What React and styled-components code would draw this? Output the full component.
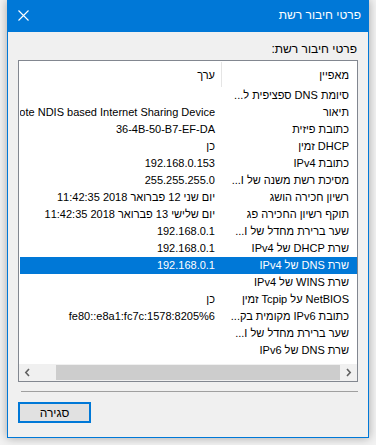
import React from "react";
import styled, { createGlobalStyle } from "styled-components";

const GlobalStyle = createGlobalStyle`
  html, body { margin: 0; padding: 0; }
  body {
    background: #f2f2f2;
    font-family: "Liberation Sans", "DejaVu Sans", Arial, sans-serif;
    font-size: 12px;
  }
`;

const Page = styled.div`
  width: 376px;
  height: 445px;
  padding-left: 7px;
  box-sizing: border-box;
  overflow: hidden;
`;

const Window = styled.div`
  width: 362px;
  height: 438px;
  box-sizing: border-box;
  border: 1px solid #0078d7;
  border-top: none;
  background: #f0f0f0;
  box-shadow: 0 0 9px rgba(0, 0, 0, 0.32);
  display: flex;
  flex-direction: column;
`;

const TitleBar = styled.div`
  height: 31px;
  flex: none;
  background: #0078d7;
  color: #fff;
  direction: rtl;
  display: flex;
  align-items: center;
  justify-content: space-between;
  padding: 0 7px 1px 10px;
`;

const Title = styled.span`
  font-size: 12px;
  line-height: 15px;
`;

const Close = styled.svg`
  width: 11px;
  height: 11px;
  display: block;
`;

const Content = styled.div`
  flex: 1;
  direction: rtl;
  display: flex;
  flex-direction: column;
  padding: 10px 10px 0 10px;
`;

const Label = styled.div`
  line-height: 15px;
  color: #000;
  margin-bottom: 3px;
  padding-right: 1px;
`;

const List = styled.div`
  height: 322px;
  box-sizing: border-box;
  border: 1px solid #828790;
  background: #fff;
  display: flex;
  flex-direction: column;
  overflow: hidden;
  font-size: 11px;
`;

const Header = styled.div`
  height: 26px;
  flex: none;
  display: flex;
  align-items: stretch;
  padding-top: 1px;
  box-sizing: border-box;
`;

const HeadCell = styled.div`
  display: flex;
  align-items: center;
  box-sizing: border-box;
  color: #000;
  white-space: nowrap;
  ${(p) =>
    p.$prop
      ? `width: 136px; flex: none; padding-right: 8px; border-left: 1px solid #e5e5e5;`
      : `flex: 1; padding-right: 6px;`}
`;

const Rows = styled.div`
  flex: 1;
  display: flex;
  flex-direction: column;
`;

const Row = styled.div`
  height: 17px;
  flex: none;
  display: flex;
  align-items: center;
  margin-left: 1px;
  background: ${(p) => (p.$selected ? "#0078d7" : "transparent")};
  color: ${(p) => (p.$selected ? "#fff" : "#000")};
`;

const Cell = styled.div`
  white-space: nowrap;
  overflow: hidden;
  box-sizing: border-box;
  line-height: 17px;
  text-align: right;
  ${(p) =>
    p.$prop
      ? `width: 136px; flex: none; padding-right: 8px;`
      : `flex: 1; padding-right: 6px; min-width: 0;`}
`;

const Scrollbar = styled.div`
  direction: ltr;
  height: 17px;
  flex: none;
  background: #f0f0f0;
  display: flex;
  align-items: stretch;
`;

const Arrow = styled.div`
  width: 17px;
  flex: none;
  display: flex;
  align-items: center;
  justify-content: center;
`;

const Thumb = styled.div`
  flex: 1;
  margin-left: 20px;
  margin-top: 1px;
  margin-bottom: 1px;
  background: #cdcdcd;
`;

const Separator = styled.div`
  height: 1px;
  background: #a0a0a0;
  margin: 9px 0 10px 3px;
`;

const Footer = styled.div`
  display: flex;
  justify-content: flex-end;
`;

const Button = styled.button`
  width: 73px;
  height: 21px;
  box-sizing: border-box;
  border: 2px solid #0078d7;
  background: #e1e1e1;
  font-family: inherit;
  font-size: 12px;
  color: #000;
  padding: 0;
  direction: rtl;
`;

const rows = [
  ["סיומת DNS ספציפית ל...", ""],
  ["תיאור", "Remote NDIS based Internet Sharing Device"],
  ["כתובת פיזית", "36-4B-50-B7-EF-DA"],
  ["DHCP זמין", "כן"],
  ["כתובת IPv4", "192.168.0.153"],
  ["מסיכת רשת משנה של I...", "255.255.255.0"],
  ["רשיון חכירה הושג", "יום שני 12 פברואר 2018 11:42:35"],
  ["תוקף רשיון החכירה פג", "יום שלישי 13 פברואר 2018 11:42:35"],
  ["שער ברירת מחדל של I...", "192.168.0.1"],
  ["שרת DHCP של IPv4", "192.168.0.1"],
  ["שרת DNS של IPv4", "192.168.0.1"],
  ["שרת WINS של IPv4", ""],
  ["NetBIOS על Tcpip זמין", "כן"],
  ["כתובת IPv6 מקומית בק...", "fe80::e8a1:fc7c:1578:8205%6"],
  ["שער ברירת מחדל של I...", ""],
  ["שרת DNS של IPv6", ""],
];

const Chevron = ({ dir }) => (
  <svg width="7" height="9" viewBox="0 0 7 9">
    <path
      d={dir === "left" ? "M5 1 L1.8 4.5 L5 8" : "M2 1 L5.2 4.5 L2 8"}
      fill="none"
      stroke="#606060"
      strokeWidth="1.6"
    />
  </svg>
);

export default function App() {
  return (
    <>
      <GlobalStyle />
      <Page>
        <Window>
          <TitleBar>
            <Title>פרטי חיבור רשת</Title>
            <Close viewBox="0 0 11 11">
              <path d="M0.5 0.5 L10.5 10.5 M10.5 0.5 L0.5 10.5" stroke="#fff" strokeWidth="1.1" />
            </Close>
          </TitleBar>
          <Content>
            <Label>פרטי חיבור רשת:</Label>
            <List>
              <Header>
                <HeadCell $prop>מאפיין</HeadCell>
                <HeadCell>ערך</HeadCell>
              </Header>
              <Rows>
                {rows.map(([p, v], i) => (
                  <Row key={i} $selected={i === 10}>
                    <Cell $prop>{p}</Cell>
                    <Cell>{v}</Cell>
                  </Row>
                ))}
              </Rows>
              <Scrollbar>
                <Arrow>
                  <Chevron dir="left" />
                </Arrow>
                <Thumb />
                <Arrow>
                  <Chevron dir="right" />
                </Arrow>
              </Scrollbar>
            </List>
            <Separator />
            <Footer>
              <Button>סגירה</Button>
            </Footer>
          </Content>
        </Window>
      </Page>
    </>
  );
}
